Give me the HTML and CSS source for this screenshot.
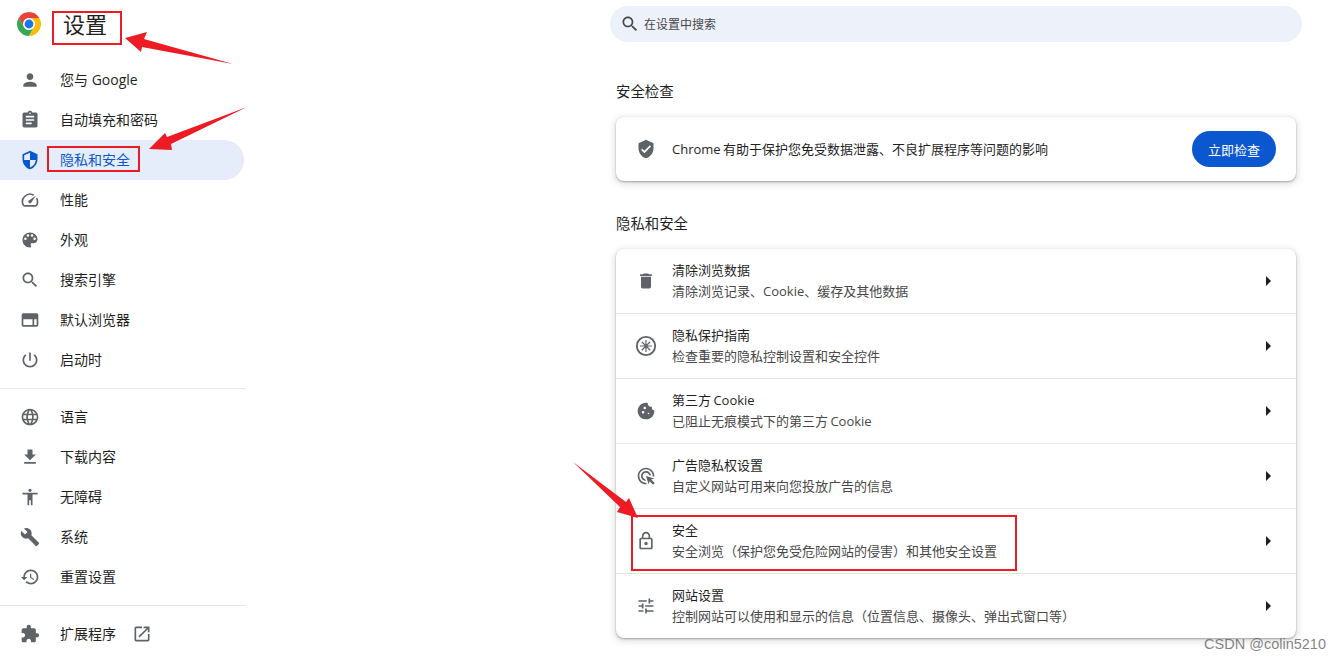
FILE: index.html
```html
<!DOCTYPE html>
<html lang="zh-CN">
<head>
<meta charset="utf-8">
<title>设置</title>
<link rel="stylesheet" href="styles.css">
</head>
<body>
<div class="page">
  <aside class="sidebar">
    <header class="brand">
      <svg class="logo" viewBox="0 0 24 24">
        <path fill="#ea4335" d="M12 0A12 12 0 0 1 22.39 6H12A6 6 0 0 0 6.8 15L1.61 6A12 12 0 0 1 12 0z"/>
        <path fill="#34a853" d="M1.61 6A12 12 0 0 0 12 24L17.2 15A6 6 0 0 1 6.8 15z"/>
        <path fill="#fbbc04" d="M22.39 6H12A6 6 0 0 1 17.2 15L12 24A12 12 0 0 0 22.39 6z"/>
        <circle cx="12" cy="12" r="5.6" fill="#fff"/>
        <circle cx="12" cy="12" r="4.4" fill="#1a73e8"/>
      </svg>
      <h1 class="title">设置</h1>
    </header>
    <nav class="nav">
      <a class="item"><svg class="ico" viewBox="0 0 24 24"><path d="M12 12c2.21 0 4-1.79 4-4s-1.79-4-4-4-4 1.79-4 4 1.79 4 4 4zm0 2c-2.67 0-8 1.34-8 4v2h16v-2c0-2.66-5.33-4-8-4z"/></svg><span>您与 Google</span></a>
      <a class="item"><svg class="ico" viewBox="0 0 24 24"><path d="M19 3h-4.18C14.4 1.84 13.3 1 12 1c-1.3 0-2.4.84-2.82 2H5c-1.1 0-2 .9-2 2v14c0 1.1.9 2 2 2h14c1.1 0 2-.9 2-2V5c0-1.1-.9-2-2-2zm-7 0c.55 0 1 .45 1 1s-.45 1-1 1-1-.45-1-1 .45-1 1-1zm2 14H7v-2h7v2zm3-4H7v-2h10v2zm0-4H7V7h10v2z"/></svg><span>自动填充和密码</span></a>
      <a class="item active"><svg class="ico" viewBox="0 0 24 24"><path d="M12 1L3 5v6c0 5.55 3.84 10.74 9 12 5.16-1.26 9-6.45 9-12V5l-9-4zm0 10.99h7c-.53 4.12-3.28 7.79-7 8.94V12H5V6.3l7-3.11v8.8z"/></svg><span>隐私和安全</span></a>
      <a class="item"><svg class="ico" viewBox="0 0 24 24"><path d="M20.38 8.57l-1.23 1.85a8 8 0 0 1-.22 7.58H5.07A8 8 0 0 1 15.58 6.85l1.85-1.23A10 10 0 0 0 3.35 19a2 2 0 0 0 1.72 1h13.85a2 2 0 0 0 1.74-1 10 10 0 0 0-.27-10.44zm-9.79 6.84a2 2 0 0 0 2.83 0l5.66-8.49-8.49 5.66a2 2 0 0 0 0 2.83z"/></svg><span>性能</span></a>
      <a class="item"><svg class="ico" viewBox="0 0 24 24"><path d="M12 3c-4.97 0-9 4.03-9 9s4.03 9 9 9c.83 0 1.5-.67 1.5-1.5 0-.39-.15-.74-.39-1.01-.23-.26-.38-.61-.38-.99 0-.83.67-1.5 1.5-1.5H16c2.76 0 5-2.24 5-5 0-4.42-4.03-8-9-8zm-5.5 9c-.83 0-1.5-.67-1.5-1.5S5.67 9 6.5 9 8 9.67 8 10.5 7.33 12 6.5 12zm3-4C8.67 8 8 7.33 8 6.5S8.67 5 9.5 5s1.5.67 1.5 1.5S10.33 8 9.5 8zm5 0c-.83 0-1.5-.67-1.5-1.5S13.67 5 14.5 5s1.5.67 1.5 1.5S15.33 8 14.5 8zm3 4c-.83 0-1.5-.67-1.5-1.5S16.67 9 17.5 9s1.5.67 1.5 1.5-.67 1.5-1.5 1.5z"/></svg><span>外观</span></a>
      <a class="item"><svg class="ico" viewBox="0 0 24 24"><path d="M15.5 14h-.79l-.28-.27C15.41 12.59 16 11.11 16 9.5 16 5.91 13.09 3 9.5 3S3 5.91 3 9.5 5.91 16 9.5 16c1.61 0 3.09-.59 4.23-1.57l.27.28v.79l5 4.99L20.49 19l-4.99-5zm-6 0C7.01 14 5 11.99 5 9.5S7.01 5 9.5 5 14 7.01 14 9.5 11.99 14 9.5 14z"/></svg><span>搜索引擎</span></a>
      <a class="item"><svg class="ico" viewBox="0 0 24 24"><path fill-rule="evenodd" d="M20 4H4a2 2 0 0 0-2 2v12a2 2 0 0 0 2 2h16a2 2 0 0 0 2-2V6a2 2 0 0 0-2-2zM4 18v-7h11v7H4zm13 0v-7h3v7h-3z"/></svg><span>默认浏览器</span></a>
      <a class="item"><svg class="ico" viewBox="0 0 24 24"><path d="M13 3h-2v10h2V3zm4.83 2.17l-1.42 1.42C17.99 7.86 19 9.81 19 12c0 3.87-3.13 7-7 7s-7-3.13-7-7c0-2.19 1.01-4.14 2.58-5.42L6.17 5.17C4.23 6.82 3 9.26 3 12c0 4.97 4.03 9 9 9s9-4.03 9-9c0-2.74-1.23-5.18-3.17-6.83z"/></svg><span>启动时</span></a>
    </nav>
    <hr class="rule">
    <nav class="nav">
      <a class="item"><svg class="ico" viewBox="0 0 24 24"><path d="M11.99 2C6.47 2 2 6.48 2 12s4.47 10 9.99 10C17.52 22 22 17.52 22 12S17.52 2 11.99 2zm6.93 6h-2.95c-.32-1.25-.78-2.45-1.38-3.56 1.84.63 3.37 1.91 4.33 3.56zM12 4.04c.83 1.2 1.48 2.53 1.91 3.96h-3.82c.43-1.43 1.08-2.76 1.91-3.96zM4.26 14C4.1 13.36 4 12.69 4 12s.1-1.36.26-2h3.38c-.08.66-.14 1.32-.14 2 0 .68.06 1.34.14 2H4.26zm.82 2h2.95c.32 1.25.78 2.45 1.38 3.56-1.84-.63-3.37-1.9-4.33-3.56zm2.95-8H5.08c.96-1.66 2.49-2.93 4.33-3.56C8.81 5.55 8.35 6.75 8.03 8zM12 19.96c-.83-1.2-1.48-2.53-1.91-3.96h3.82c-.43 1.43-1.08 2.76-1.91 3.96zM14.34 14H9.66c-.09-.66-.16-1.32-.16-2 0-.68.07-1.35.16-2h4.68c.09.65.16 1.32.16 2 0 .68-.07 1.34-.16 2zm.25 5.56c.6-1.11 1.06-2.31 1.38-3.56h2.95c-.96 1.65-2.49 2.93-4.33 3.56zM16.36 14c.08-.66.14-1.32.14-2 0-.68-.06-1.34-.14-2h3.38c.16.64.26 1.31.26 2s-.1 1.36-.26 2h-3.38z"/></svg><span>语言</span></a>
      <a class="item"><svg class="ico" viewBox="0 0 24 24"><path d="M19 9h-4V3H9v6H5l7 7 7-7zM5 18v2h14v-2H5z"/></svg><span>下载内容</span></a>
      <a class="item"><svg class="ico" viewBox="0 0 24 24"><path d="M12 2c1.1 0 2 .9 2 2s-.9 2-2 2-2-.9-2-2 .9-2 2-2zm9 7h-6v13h-2v-6h-2v6H9V9H3V7h18v2z"/></svg><span>无障碍</span></a>
      <a class="item"><svg class="ico" viewBox="0 0 24 24"><path d="M22.7 19l-9.1-9.1c.9-2.3.4-5-1.5-6.9-2-2-5-2.4-7.4-1.3L9 6 6 9 1.6 4.7C.4 7.1.9 10.1 2.9 12.1c1.9 1.9 4.6 2.4 6.9 1.5l9.1 9.1c.4.4 1 .4 1.4 0l2.3-2.3c.5-.4.5-1.1.1-1.4z"/></svg><span>系统</span></a>
      <a class="item"><svg class="ico" viewBox="0 0 24 24"><path d="M13 3c-4.97 0-9 4.03-9 9H1l3.89 3.89.07.14L9 12H6c0-3.87 3.13-7 7-7s7 3.13 7 7-3.13 7-7 7c-1.93 0-3.68-.79-4.94-2.06l-1.42 1.42C8.27 19.99 10.51 21 13 21c4.97 0 9-4.03 9-9s-4.03-9-9-9zm-1 5v5l4.28 2.54.72-1.21-3.5-2.08V8H12z"/></svg><span>重置设置</span></a>
    </nav>
    <hr class="rule">
    <nav class="nav">
      <a class="item"><svg class="ico" viewBox="0 0 24 24"><path d="M20.5 11H19V7c0-1.1-.9-2-2-2h-4V3.5C13 2.12 11.88 1 10.5 1S8 2.12 8 3.5V5H4c-1.1 0-1.99.9-1.99 2v3.8H3.5c1.49 0 2.7 1.21 2.7 2.7s-1.21 2.7-2.7 2.7H2V20c0 1.1.9 2 2 2h3.8v-1.5c0-1.49 1.21-2.7 2.7-2.7 1.49 0 2.7 1.21 2.7 2.7V22H17c1.1 0 2-.9 2-2v-4h1.5c1.38 0 2.5-1.12 2.5-2.5S21.88 11 20.5 11z"/></svg><span>扩展程序</span><svg class="ico ext" viewBox="0 0 24 24"><path d="M19 19H5V5h7V3H5c-1.11 0-2 .9-2 2v14c0 1.1.89 2 2 2h14c1.1 0 2-.9 2-2v-7h-2v7zM14 3v2h3.59l-9.83 9.83 1.41 1.41L19 6.41V10h2V3h-7z"/></svg></a>
    </nav>
  </aside>

  <main class="main">
    <div class="search">
      <svg class="ico search-ico" viewBox="0 0 24 24"><path d="M15.5 14h-.79l-.28-.27C15.41 12.59 16 11.11 16 9.5 16 5.91 13.09 3 9.5 3S3 5.91 3 9.5 5.91 16 9.5 16c1.61 0 3.09-.59 4.23-1.57l.27.28v.79l5 4.99L20.49 19l-4.99-5zm-6 0C7.01 14 5 11.99 5 9.5S7.01 5 9.5 5 14 7.01 14 9.5 11.99 14 9.5 14z"/></svg>
      <span>在设置中搜索</span>
    </div>

    <section class="section first">
      <h2 class="heading">安全检查</h2>
      <div class="card check">
        <svg class="ico" viewBox="0 0 24 24"><path d="M12 1L3 5v6c0 5.55 3.84 10.74 9 12 5.16-1.26 9-6.45 9-12V5l-9-4zm-2 16l-4-4 1.41-1.41L10 14.17l6.59-6.59L18 9l-8 8z"/></svg>
        <p class="check-text">Chrome 有助于保护您免受数据泄露、不良扩展程序等问题的影响</p>
        <button class="btn">立即检查</button>
      </div>
    </section>

    <section class="section second">
      <h2 class="heading">隐私和安全</h2>
      <div class="card">
        <div class="row">
          <svg class="ico" viewBox="0 0 24 24"><path d="M6 19c0 1.1.9 2 2 2h8c1.1 0 2-.9 2-2V7H6v12zM19 4h-3.5l-1-1h-5l-1 1H5v2h14V4z"/></svg>
          <div class="copy"><div class="name">清除浏览数据</div><div class="desc">清除浏览记录、Cookie、缓存及其他数据</div></div>
          <span class="arrow"></span>
        </div>
        <div class="row">
          <svg class="ico large" viewBox="0 0 24 24"><circle cx="12" cy="12" r="10" fill="none" stroke="#5f6368" stroke-width="2"/><path fill="none" stroke="#5f6368" stroke-width="1.3" d="M12 5.5v13M5.5 12h13M7.4 7.4l9.2 9.2M16.6 7.4l-9.2 9.2"/></svg>
          <div class="copy"><div class="name">隐私保护指南</div><div class="desc">检查重要的隐私控制设置和安全控件</div></div>
          <span class="arrow"></span>
        </div>
        <div class="row">
          <svg class="ico" viewBox="0 0 24 24"><path d="M21.95 10.99c-1.79-.03-3.7-1.95-2.68-4.22-2.98 1-5.77-1.59-5.19-4.56C7.1.74 2 6.41 2 12c0 5.52 4.48 10 10 10 5.89 0 10.54-5.08 9.95-11.01zM8.5 15c-.83 0-1.5-.67-1.5-1.5S7.67 12 8.5 12s1.5.67 1.5 1.5S9.33 15 8.5 15zm2-5C9.67 10 9 9.33 9 8.5S9.67 7 10.5 7s1.5.67 1.5 1.5-.67 1.5-1.5 1.5zm4.5 6c-.55 0-1-.45-1-1s.45-1 1-1 1 .45 1 1-.45 1-1 1z"/></svg>
          <div class="copy"><div class="name">第三方 Cookie</div><div class="desc">已阻止无痕模式下的第三方 Cookie</div></div>
          <span class="arrow"></span>
        </div>
        <div class="row">
          <svg class="ico" viewBox="0 0 24 24"><path d="M11.71 17.99C8.53 17.84 6 15.22 6 12c0-3.31 2.69-6 6-6 3.22 0 5.84 2.53 5.99 5.71l-2.1-.63C15.48 9.31 13.89 8 12 8c-2.21 0-4 1.79-4 4 0 1.89 1.31 3.48 3.08 3.89l.63 2.1zM22 12c0 .3-.01.6-.04.9l-1.97-.59c.01-.1.01-.21.01-.31 0-4.42-3.58-8-8-8s-8 3.58-8 8 3.58 8 8 8c.1 0 .21 0 .31-.01l.59 1.97c-.3.03-.6.04-.9.04-5.52 0-10-4.48-10-10S6.48 2 12 2s10 4.48 10 10zm-3.77 4.26L22 15l-10-3 3 10 1.26-3.77 4.27 4.27 1.98-1.98-4.28-4.26z"/></svg>
          <div class="copy"><div class="name">广告隐私权设置</div><div class="desc">自定义网站可用来向您投放广告的信息</div></div>
          <span class="arrow"></span>
        </div>
        <div class="row">
          <svg class="ico" viewBox="0 0 24 24"><path d="M18 8h-1V6c0-2.76-2.24-5-5-5S7 3.24 7 6v2H6c-1.1 0-2 .9-2 2v10c0 1.1.9 2 2 2h12c1.1 0 2-.9 2-2V10c0-1.1-.9-2-2-2zM9 6c0-1.66 1.34-3 3-3s3 1.34 3 3v2H9V6zm9 14H6V10h12v10zm-6-3c1.1 0 2-.9 2-2s-.9-2-2-2-2 .9-2 2 .9 2 2 2z"/></svg>
          <div class="copy"><div class="name">安全</div><div class="desc">安全浏览（保护您免受危险网站的侵害）和其他安全设置</div></div>
          <span class="arrow"></span>
        </div>
        <div class="row">
          <svg class="ico" viewBox="0 0 24 24"><path d="M3 17v2h6v-2H3zM3 5v2h10V5H3zm10 16v-2h8v-2h-8v-2h-2v6h2zM7 9v2H3v2h4v2h2V9H7zm14 4v-2H11v2h10zm-6-4h2V7h4V5h-4V3h-2v6z"/></svg>
          <div class="copy"><div class="name">网站设置</div><div class="desc">控制网站可以使用和显示的信息（位置信息、摄像头、弹出式窗口等）</div></div>
          <span class="arrow"></span>
        </div>
      </div>
    </section>
  </main>

  <div class="mark mark-title"></div>
  <div class="mark mark-privacy"></div>
  <div class="mark mark-security"></div>
  <svg class="arrows" viewBox="0 0 1341 659">
    <polygon points="125,38 147,32 144,39 233,64 142,47 141,52"/>
    <polygon points="149,149 165,133 167,137 247,107 171,144 172,150"/>
    <polygon points="638,518 629,498 626,502 573,462 620,507 617,512"/>
  </svg>
  <div class="watermark">CSDN @colin5210</div>
</div>
</body>
</html>
```

FILE: styles.css
```css
* { box-sizing: border-box; }
html, body { margin: 0; padding: 0; background: #fff; }
body {
  font-family: "Open Sans", "Noto Sans CJK SC", sans-serif;
  color: #1f1f1f;
}
.page {
  position: relative;
  display: flex;
  width: 1341px;
  height: 659px;
  overflow: hidden;
}
.ico { width: 20px; height: 20px; flex: none; fill: #5f6368; }

/* sidebar */
.sidebar { width: 246px; flex: none; }
.brand { display: flex; align-items: center; height: 60px; padding: 0 0 13px 17px; gap: 22px; }
.logo { width: 24px; height: 24px; flex: none; }
.title { margin: 0; font-size: 22px; font-weight: 400; line-height: 30px; color: #1f1f1f; }
.nav { display: flex; flex-direction: column; }
.item {
  display: flex;
  align-items: center;
  gap: 20px;
  height: 40px;
  width: 244px;
  padding-left: 20px;
  font-size: 14px;
  line-height: 20px;
  color: #1f1f1f;
}
.item.active { background: #e6edfa; border-radius: 0 20px 20px 0; color: #0b57d0; }
.item.active .ico { fill: #0b57d0; }
.item .ext { margin-left: -4px; }
.rule { margin: 8px 0 8px; border: 0; border-top: 1px solid #e6e6e6; }

/* main column */
.main { width: 692px; margin-left: 364px; flex: none; padding-top: 6px; }
.search {
  display: flex;
  align-items: center;
  gap: 4px;
  height: 36px;
  padding-left: 10px;
  border-radius: 18px;
  background: #edf1fa;
  font-size: 12px;
  color: #474747;
}
.search .search-ico { width: 20px; height: 20px; fill: #474747; }
.section { margin: 0 6px; }
.first { margin-top: 39px; }
.second { margin-top: 32px; }
.heading { margin: 0 0 15px; font-size: 14.4px; font-weight: 400; line-height: 21px; color: #1f1f1f; }
.card {
  background: #fff;
  border-radius: 8px;
  box-shadow: 0 1px 2px rgba(60, 64, 67, .4), 0 2px 6px 2px rgba(60, 64, 67, .15);
}
.check { display: flex; align-items: center; gap: 16px; height: 64px; padding: 0 20px; }
.check-text { flex: 1; margin: 0; font-size: 13px; line-height: 20px; color: #1f1f1f; word-spacing: -1px; }
.btn {
  width: 84px;
  height: 36px;
  border: 0;
  border-radius: 18px;
  background: #0b57d0;
  color: #fff;
  font: inherit;
  font-size: 13px;
}
.row {
  display: flex;
  align-items: center;
  gap: 16px;
  height: 65px;
  padding: 0 25px 0 20px;
  border-top: 1px solid #e6e6e6;
}
.row:first-child { height: 64px; border-top: 0; }
.row .large { margin: 0 -1px; width: 22px; height: 22px; }
.copy { flex: 1; min-width: 0; }
.name { font-size: 13px; line-height: 19px; margin-bottom: 1px; color: #1f1f1f; word-spacing: -1px; }
.desc { font-size: 13px; line-height: 20px; color: #474747; word-spacing: -1px; }
.arrow {
  width: 0;
  height: 0;
  border-left: 5px solid #1f1f1f;
  border-top: 5px solid transparent;
  border-bottom: 5px solid transparent;
}

/* annotations drawn over the screenshot */
.mark { position: absolute; border: 2px solid #ed1c24; }
.mark-title { left: 52px; top: 11px; width: 70px; height: 34px; }
.mark-privacy { left: 47px; top: 146px; width: 93px; height: 26px; }
.mark-security { left: 631px; top: 515px; width: 386px; height: 56px; }
.arrows { position: absolute; left: 0; top: 0; width: 1341px; height: 659px; pointer-events: none; }
.arrows polygon { fill: #ed1c24; }
.watermark {
  position: absolute;
  right: 15px;
  bottom: 6px;
  font-family: "Liberation Sans", sans-serif;
  font-size: 14.5px;
  line-height: 18px;
  color: rgba(90, 90, 90, .75);
}
```
